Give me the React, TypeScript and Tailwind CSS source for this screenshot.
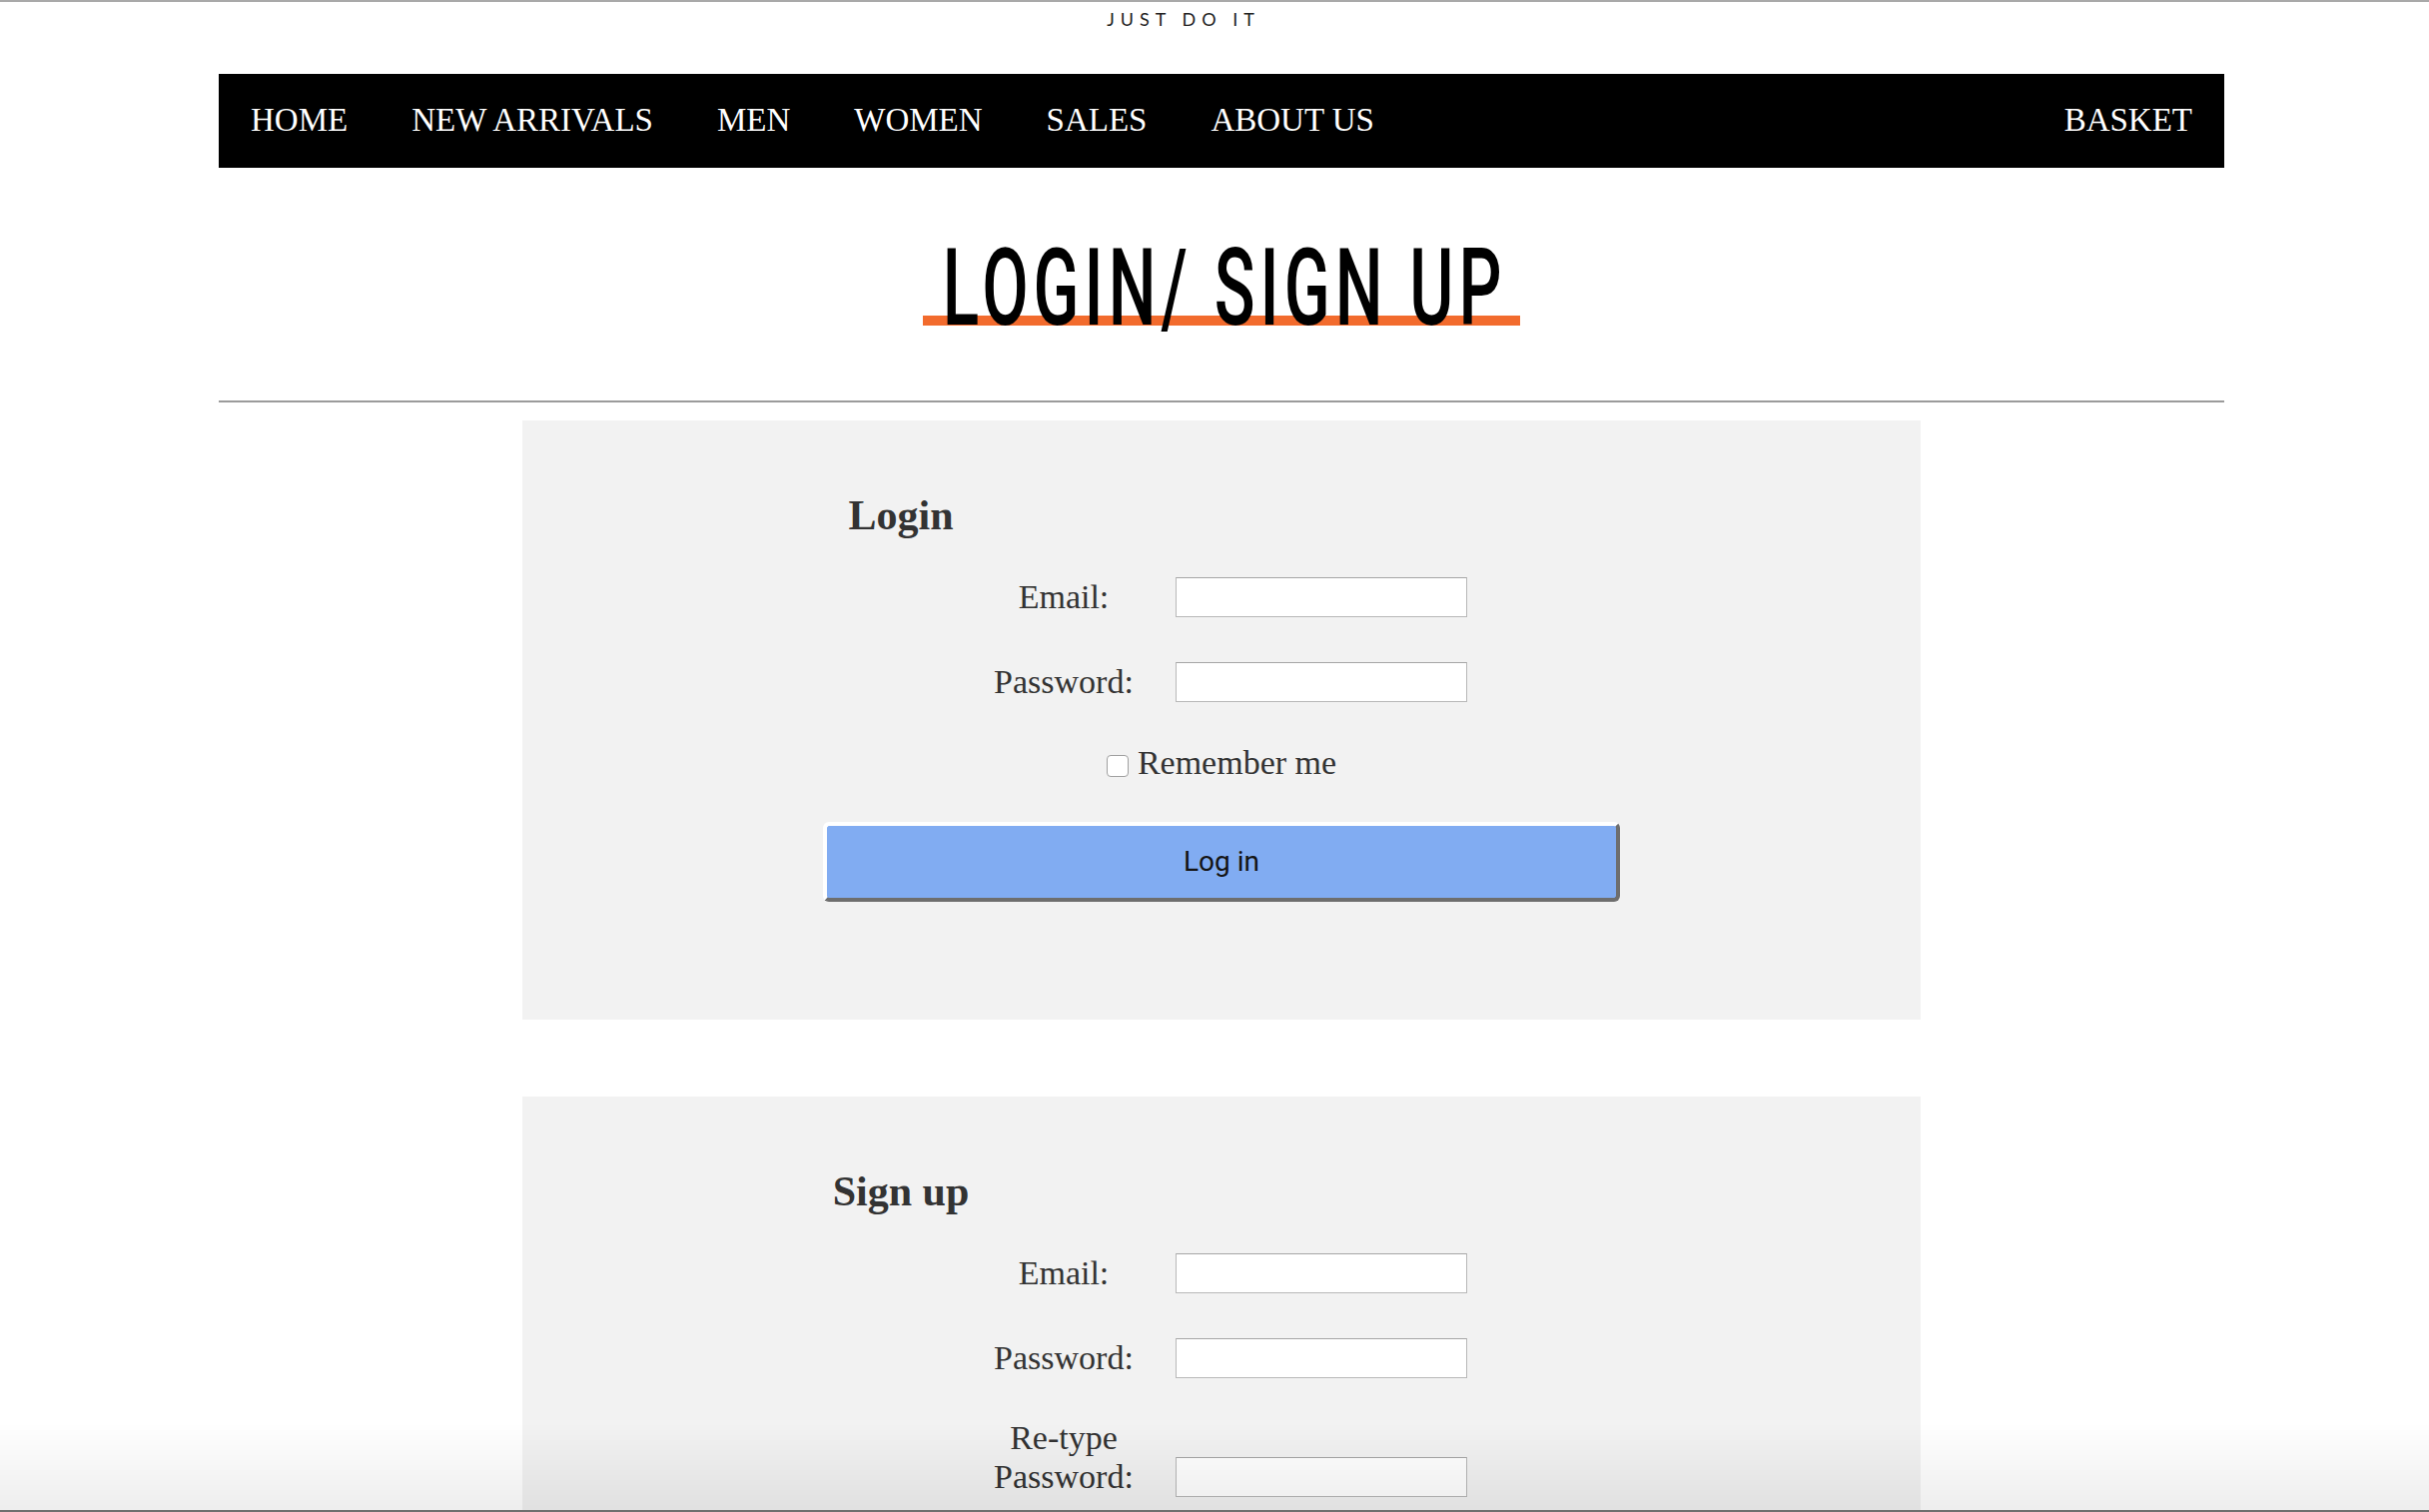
const links = ["HOME", "NEW ARRIVALS", "MEN", "WOMEN", "SALES", "ABOUT US"];

function Field({ label, first, gap }: { label: string; first?: boolean; gap?: string }) {
  return (
    <div className={`ml-[462px] flex items-end gap-[32px] ${first ? "mt-[38px]" : gap ?? "mt-[45px]"}`}>
      <label className="w-[160px] pb-[1px] text-center text-[34px] leading-[39px]">{label}</label>
      <input
        type="text"
        className="box-border h-[40px] w-[292px] border border-[#b8b8b8] border-t-[#a6a6a6] bg-white outline-none"
      />
    </div>
  );
}

function Button({ children }: { children: string }) {
  return (
    <button className="mx-auto mt-[40px] box-border block h-[80px] w-[798px] rounded-[6px] border-4 border-t-white border-l-white border-r-[#6e6e6e] border-b-[#6e6e6e] bg-[#81acf2] font-['Roboto',sans-serif] text-[28px] text-[#141414]">
      {children}
    </button>
  );
}

export default function App() {
  return (
    <div className="min-h-screen bg-white font-['Liberation_Serif',serif] text-[#333]">
      <div className="h-[2px] bg-[#a9a9a9]" />
      <div className="mt-[7px] pr-[62px] text-center font-['Lato',sans-serif] text-[18px] leading-[20px] tracking-[6px] text-[#222]">
        JUST DO IT
      </div>

      <div className="ml-[219px] w-[2008px]">
        {/* top menu */}
        <nav className="mt-[45px] flex h-[94px] items-center bg-black text-[33px] text-white">
          {links.map((l) => (
            <a key={l} className="px-[32px] whitespace-nowrap">
              {l}
            </a>
          ))}
          <a className="ml-auto px-[32px]">BASKET</a>
        </nav>

        {/* page title */}
        <div className="relative mx-auto mt-[67px] flex w-[598px] justify-center">
          <span className="absolute inset-x-0 bottom-[16px] h-[10px] bg-[#f26b2d]" />
          <h1 className="relative translate-x-[3px] scale-x-[0.63] whitespace-nowrap font-['Roboto',sans-serif] text-[107px] font-medium leading-none tracking-[8px] text-black">
            LOGIN/ SIGN UP
          </h1>
        </div>

        <div className="mt-[59px] h-[2px] bg-[#9b9b9b]" />

        {/* login */}
        <section className="mx-auto mt-[18px] w-[1400px] bg-[#f2f2f2] pt-[71px] pb-[118px]">
          <h2 className="ml-[229px] w-[300px] text-center text-[42px] font-bold leading-[48px]">Login</h2>
          <Field label="Email:" first />
          <Field label="Password:" />
          <div className="mt-[41px] flex items-center justify-center gap-[9px]">
            <span className="h-[22px] w-[22px] translate-y-[3px] rounded-[4px] border border-[#a0a0a0] bg-white" />
            <span className="text-[34px] leading-[39px]">Remember me</span>
          </div>
          <Button>Log in</Button>
        </section>

        {/* sign up */}
        <section className="mx-auto mt-[77px] w-[1400px] bg-[#f2f2f2] pt-[71px] pb-[118px]">
          <h2 className="ml-[229px] w-[300px] text-center text-[42px] font-bold leading-[48px]">Sign up</h2>
          <Field label="Email:" first />
          <Field label="Password:" />
          <Field label="Re-type Password:" gap="mt-[40px]" />
          <Button>Sign up</Button>
        </section>
      </div>

      {/* bottom fade of the window */}
      <div className="pointer-events-none fixed inset-x-0 bottom-0 h-[90px] bg-linear-to-b from-transparent to-black/[0.07]" />
      <div className="pointer-events-none fixed inset-x-0 bottom-0 h-[2px] bg-[#6f6f6f]" />
    </div>
  );
}
